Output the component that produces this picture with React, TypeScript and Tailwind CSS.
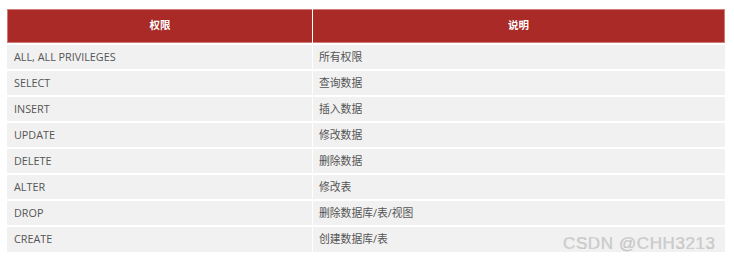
import React from 'react';

const rows = [
  { perm: 'ALL, ALL PRIVILEGES', desc: '所有权限' },
  { perm: 'SELECT', desc: '查询数据' },
  { perm: 'INSERT', desc: '插入数据' },
  { perm: 'UPDATE', desc: '修改数据' },
  { perm: 'DELETE', desc: '删除数据' },
  { perm: 'ALTER', desc: '修改表' },
  { perm: 'DROP', desc: '删除数据库/表/视图' },
  { perm: 'CREATE', desc: '创建数据库/表' },
];

const font = { fontFamily: '"Open Sans", "Noto Sans CJK SC", sans-serif' };

export default function App() {
  return (
    <div className="relative w-[734px] h-[263px] bg-white overflow-hidden" style={font}>
      <div className="pl-[7px] pt-[9px] w-[725px] flex flex-col gap-[2px]">
        <div className="flex gap-[1px] h-[34px] text-white text-[10.5px] font-bold">
          <div className="w-[305px] bg-[#a92a26] border-t border-l border-b border-[#d27b77] flex items-center justify-center">
            权限
          </div>
          <div className="flex-1 bg-[#a92a26] border-t border-r border-b border-[#d27b77] flex items-center justify-center">
            说明
          </div>
        </div>
        {rows.map((r) => (
          <div key={r.perm} className="flex gap-[1px] h-[24px] last:h-[25px] text-[10.8px] leading-none text-[#555]">
            <div className="w-[305px] bg-[#f1f1f1] flex items-center pl-[7px]">{r.perm}</div>
            <div className="flex-1 bg-[#f1f1f1] flex items-center pl-[6px]">{r.desc}</div>
          </div>
        ))}
      </div>
      <div
        className="absolute left-[563px] top-[235px] text-[17px] leading-none text-[#d0d0d0] tracking-[0.6px]"
        style={{ fontFamily: '"Liberation Sans", Arial, sans-serif', WebkitTextStroke: '0.2px #a8a8a8' }}
      >
        CSDN @CHH3213
      </div>
    </div>
  );
}
